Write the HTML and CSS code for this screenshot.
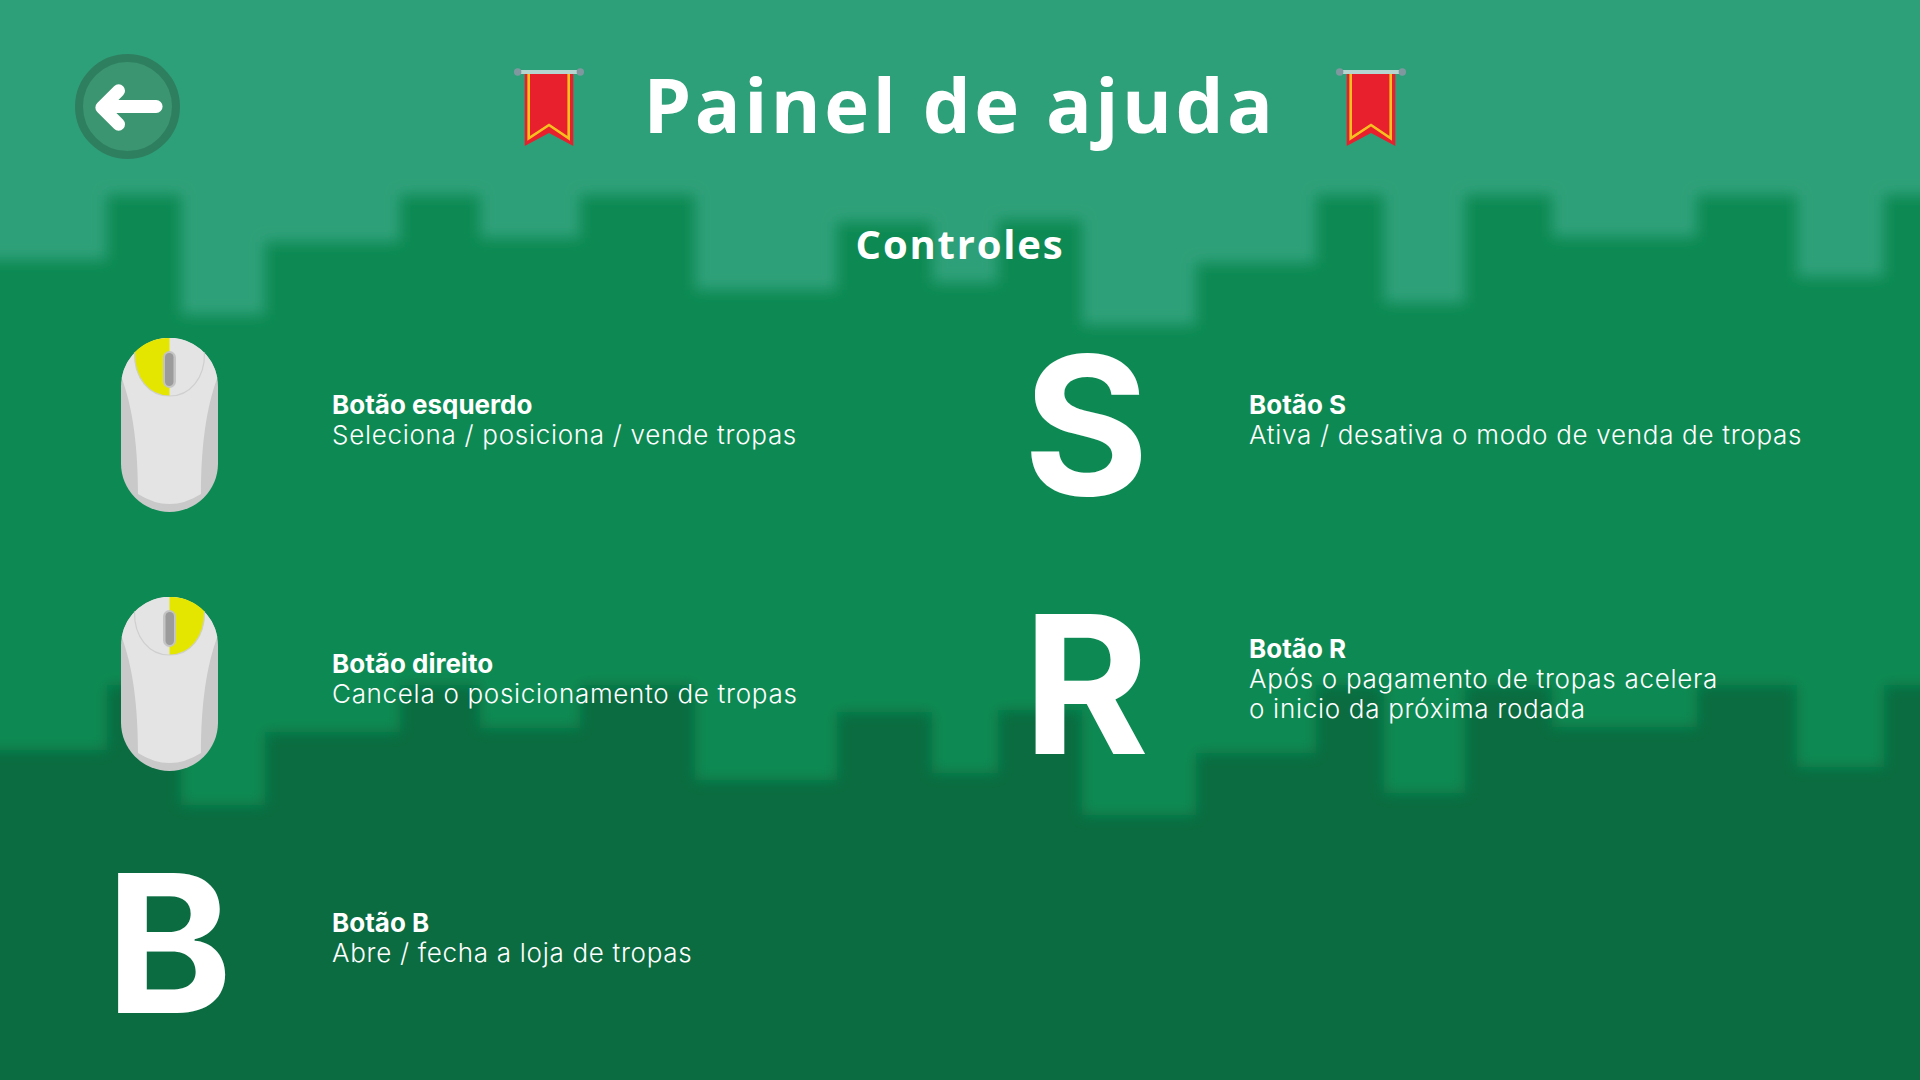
FILE: index.html
```html
<!DOCTYPE html>
<html lang="pt-BR">
<head>
    <meta charset="UTF-8">
    <meta name="viewport" content="width=device-width, initial-scale=1.0">
    <title>Painel de ajuda</title>
    <link rel="stylesheet" href="styles.css">
</head>
<body>
    <svg class="skyline" viewBox="0 0 1920 1080" aria-hidden="true">
        <defs>
            <filter id="blur" x="-5%" y="-5%" width="110%" height="110%">
                <feGaussianBlur stdDeviation="7"/>
            </filter>
            <path id="city" d="M-40 -600 H1960 V195 H1884 V277 H1797 V195 H1697 V237 H1552 V195 H1465 V303 H1384 V195 H1316 V263 H1196 V325 H1082 V220 H998 V283 H932 V222 H837 V290 H695 V195 H580 V238 H480 V195 H400 V242 H265 V315 H181 V195 H107 V260 H-40 Z"/>
        </defs>
        <use href="#city" class="city-mid" y="490" filter="url(#blur)"/>
        <use href="#city" class="city-light" filter="url(#blur)"/>
    </svg>

    <svg class="defs" aria-hidden="true">
        <symbol id="mouse" viewBox="0 0 97 174">
            <rect width="97" height="174" rx="48.5" fill="#c9c9c9"/>
            <path d="M0.7 40 A48.5 48.5 0 0 1 96.3 40 C85 70 80 110 80 156 Q48.5 176 17 156 C17 110 12 70 0.7 40 Z" fill="#e4e4e4"/>
            <path d="M48.5 0 A48.5 48.5 0 0 0 13.500 14.400 C13 40 28 58 48.5 58 Z" fill="#e4e600"/>
            <path d="M13.500 14.400 C13 40 28 58 48.5 58 C69 58 84 40 83.500 14.400" fill="none" stroke="#cfcfcf" stroke-width="1.2"/>
            <rect x="42" y="13" width="13" height="37" rx="6.5" fill="#c4c4c4"/>
            <rect x="44" y="15" width="8.5" height="33" rx="4.2" fill="#9b9b9b"/>
        </symbol>
        <symbol id="flag" viewBox="0 0 70 78">
            <path d="M10.700 5 H59.300 V78 L35 65 L10.700 78 Z" fill="#e8202e"/>
            <path d="M14.700 5 V70.300 L35 57 L54.700 70.300 V5" fill="none" stroke="#f6c01f" stroke-width="2.600"/>
            <rect x="4" y="2" width="62" height="4" fill="#b5d5d1"/>
            <circle cx="3.700" cy="4" r="3.700" fill="#7f989f"/>
            <circle cx="66.300" cy="4" r="3.700" fill="#7f989f"/>
        </symbol>
    </svg>

    <header class="top">
        <a class="back" href="#">
            <svg viewBox="0 0 90 90" class="back-arrow">
                <path d="M74 45 H22 M36 29 L19 46 L36 63" fill="none" stroke="#fff" stroke-width="13" stroke-linecap="round" stroke-linejoin="round"/>
            </svg>
        </a>
        <div class="title-row">
            <svg class="flag"><use href="#flag"/></svg>
            <h1>Painel de ajuda</h1>
            <svg class="flag"><use href="#flag"/></svg>
        </div>
    </header>

    <h2>Controles</h2>

    <main class="controls">
        <div class="item">
            <div class="icon"><svg class="mouse"><use href="#mouse"/></svg></div>
            <p><b>Botão esquerdo</b>Seleciona / posiciona / vende tropas</p>
        </div>
        <div class="item">
            <div class="icon key">S</div>
            <p><b>Botão S</b>Ativa / desativa o modo de venda de tropas</p>
        </div>
        <div class="item">
            <div class="icon"><svg class="mouse mouse-right"><use href="#mouse"/></svg></div>
            <p><b>Botão direito</b>Cancela o posicionamento de tropas</p>
        </div>
        <div class="item">
            <div class="icon key">R</div>
            <p><b>Botão R</b>Após o pagamento de tropas acelera<br>o inicio da próxima rodada</p>
        </div>
        <div class="item">
            <div class="icon key">B</div>
            <p><b>Botão B</b>Abre / fecha a loja de tropas</p>
        </div>
    </main>
</body>
</html>
```

FILE: styles.css
```css
html, body {
    margin: 0;
    height: 100%;
}
body {
    position: relative;
    width: 1920px;
    height: 1080px;
    overflow: hidden;
    background: #0a6c40;
    color: white;
    font-family: Inter, "Open Sans", sans-serif;
}
.skyline {
    position: absolute;
    top: 0;
    left: 0;
    width: 1920px;
    height: 1080px;
}
.city-mid { fill: #088a53; }
.city-light { fill: #2da079; }
.defs {
    position: absolute;
    width: 0;
    height: 0;
}
.top, h2, .controls {
    position: relative;
}
.top {
    display: flex;
    align-items: center;
    justify-content: center;
    height: 105px;
    padding-top: 54px;
}
.back {
    position: absolute;
    left: 75px;
    top: 54px;
    box-sizing: border-box;
    width: 105px;
    height: 105px;
    border: 8px solid #2e7f60;
    border-radius: 50%;
    background: #3b9570;
}
.back-arrow {
    display: block;
    width: 89px;
    height: 89px;
}
.title-row {
    display: flex;
    align-items: center;
    gap: 60px;
}
.flag {
    width: 70px;
    height: 78px;
}
h1 {
    margin: -6px 0 0;
    font-family: "Open Sans", sans-serif;
    font-size: 76px;
    font-weight: 700;
    line-height: 105px;
    letter-spacing: 3.5px;
}
h2 {
    margin: 60px 0 0;
    font-family: "Open Sans", sans-serif;
    font-size: 40px;
    font-weight: 700;
    line-height: 50px;
    letter-spacing: 1.8px;
    text-align: center;
}
.controls {
    display: grid;
    grid-template-columns: 917px 917px;
    grid-auto-rows: 259px;
    margin-top: 26px;
    padding-left: 69px;
}
.item {
    display: flex;
    align-items: center;
    gap: 63px;
}
.icon {
    flex: 0 0 200px;
    display: flex;
    justify-content: center;
}
.mouse {
    width: 97px;
    height: 174px;
}
.mouse-right {
    transform: scaleX(-1);
}
.key {
    font-size: 192px;
    font-weight: 700;
    line-height: 200px;
}
.item p {
    margin: 0 0 10px;
    font-size: 26px;
    font-weight: 300;
    line-height: 30px;
    letter-spacing: 0.7px;
}
.item b {
    display: block;
    font-weight: 700;
    letter-spacing: 0;
}
```
